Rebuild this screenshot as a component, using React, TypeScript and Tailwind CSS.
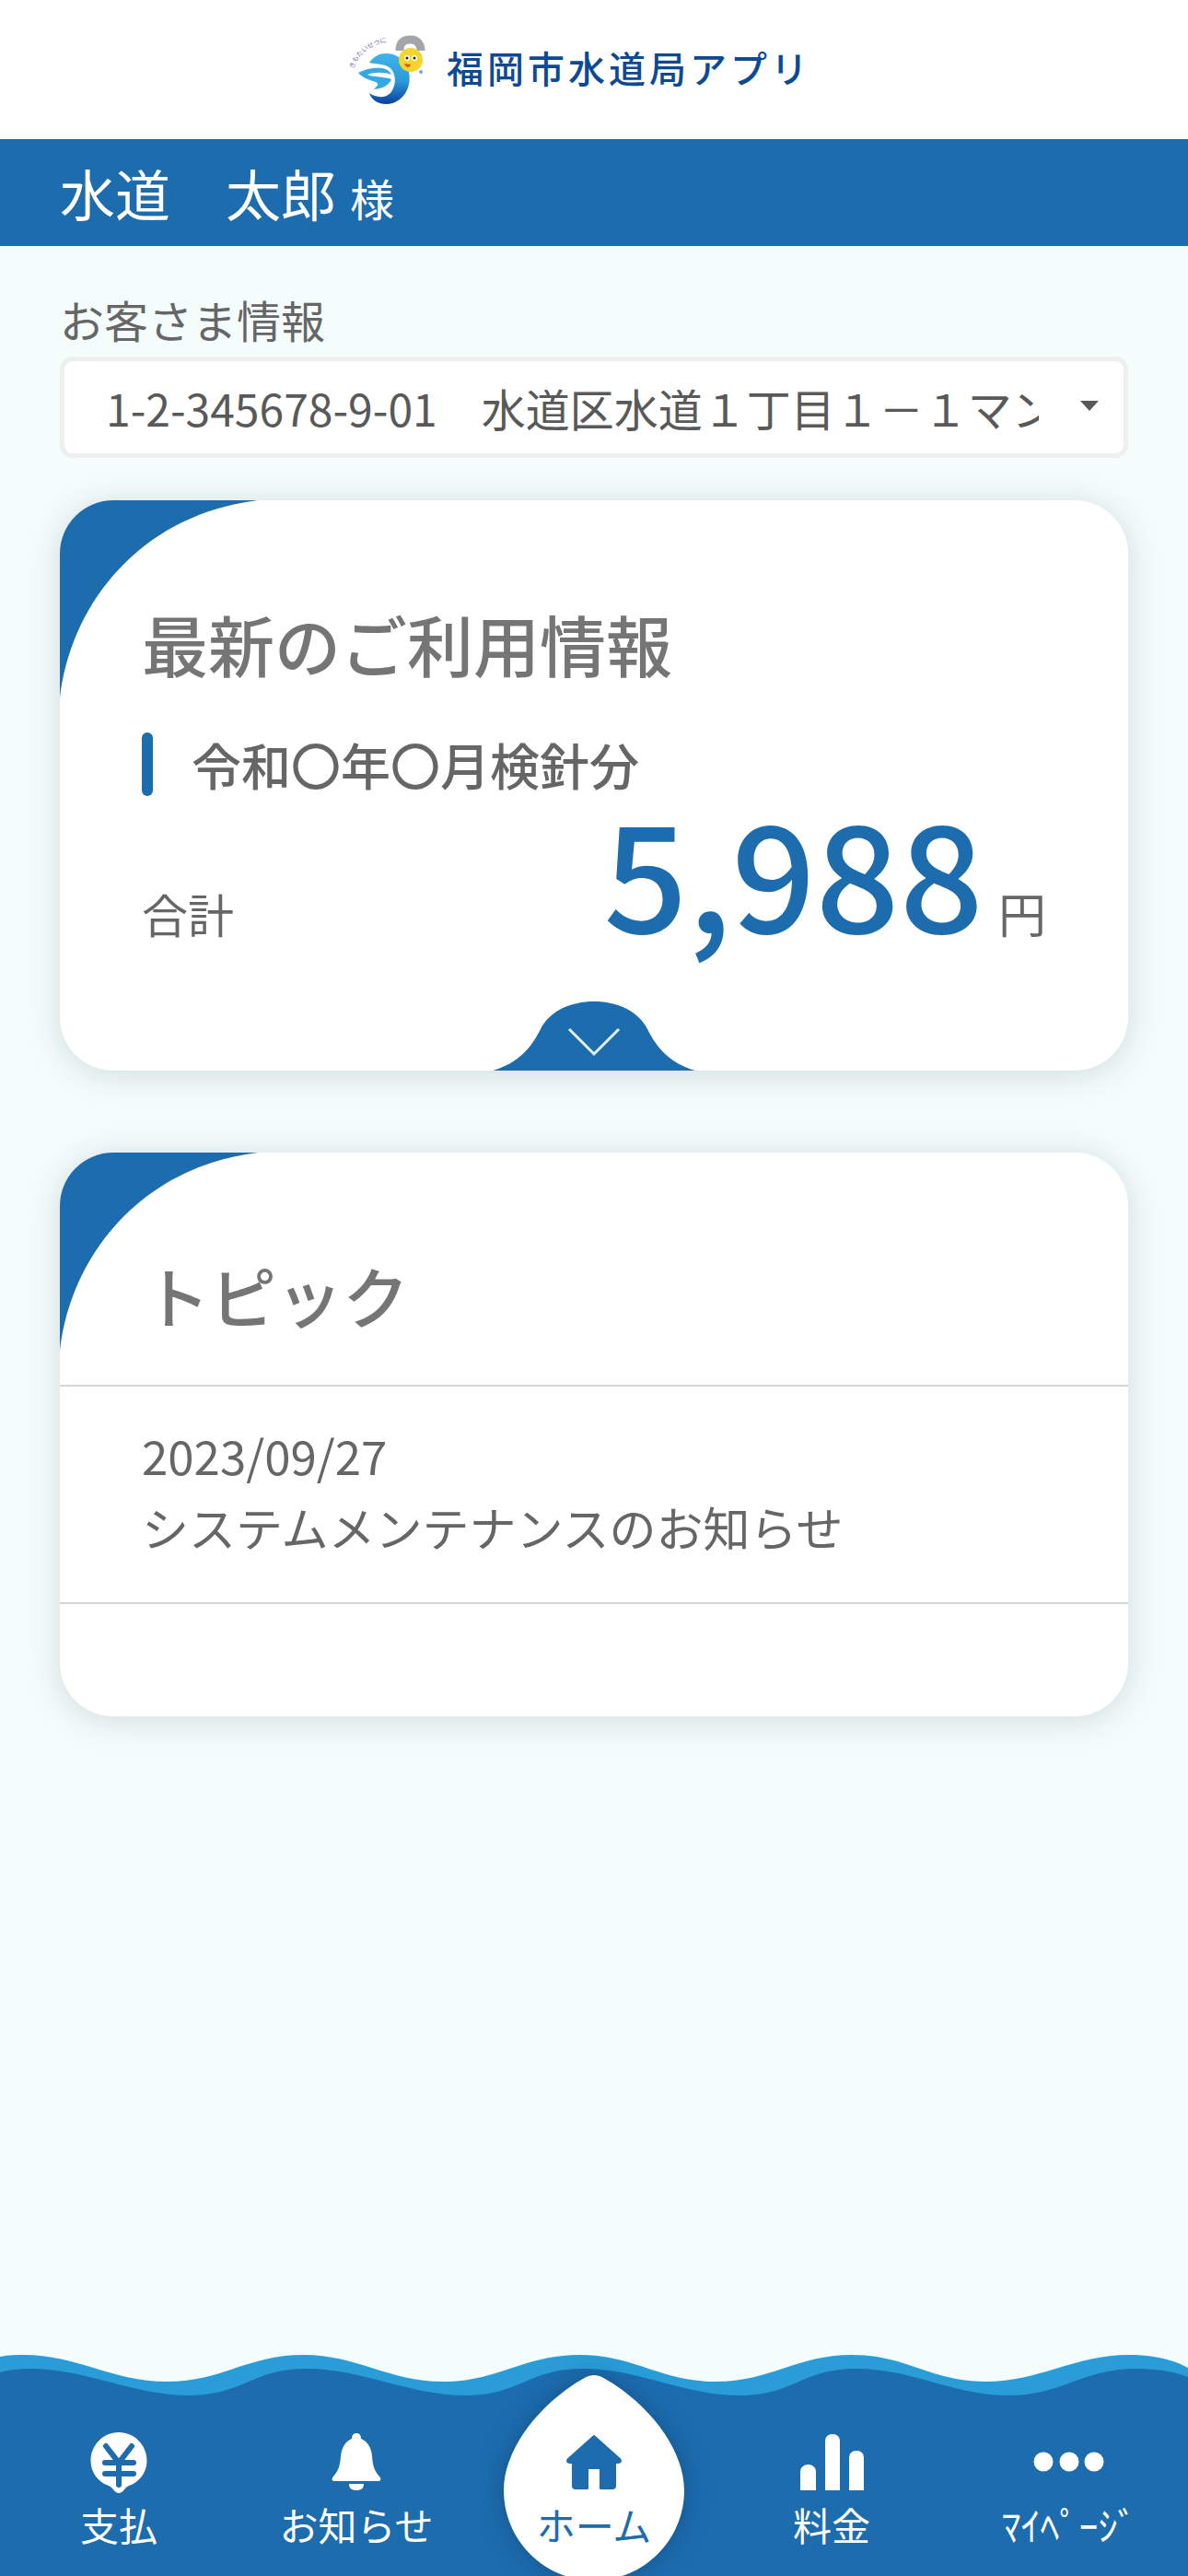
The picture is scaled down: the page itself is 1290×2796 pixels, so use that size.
const BLUE = '#1c6cae'

const CardCorner = () => (
  <svg className="absolute left-0 top-0" width="215" height="215" viewBox="0 0 215 215">
    <path d="M0 215C12 110 90 15 215 0L0 0Z" fill={BLUE} />
  </svg>
)

const Logo = () => (
  <svg width="90" height="90" viewBox="0 0 90 90">
    <defs>
      <linearGradient id="swirl" x1="0" y1="0" x2="0" y2="1">
        <stop offset="0" stopColor="#3fb4e8" />
        <stop offset="0.55" stopColor="#2a9adb" />
        <stop offset="1" stopColor="#0b3f9a" />
      </linearGradient>
      <path id="arc" d="M10 44C14 28 30 15 54 14" />
    </defs>
    <path d="M60 24C60 14 66 12 72 12C79 12 83 17 83 24" fill="none" stroke="#a3a5a8" strokeWidth="9" />
    <path
      d="M27 37C32 30 38 27 45 27C56 27 65 33 69 44C74 58 68 76 52 81C42 84 30 80 27 70C34 75 44 76 50 70C56 63 57 50 50 43C44 38 36 39 27 37Z"
      fill="url(#swirl)"
    />
    <path d="M15 48C24 43 34 42 41 43C46 44 50 47 51 50C44 47 32 47 25 50C32 53 44 52 51 55C49 61 42 65 32 66C36 62 38 60 34 58C28 56 20 54 15 48Z" fill="#35a9e4" />
    <circle cx="72" cy="34" r="13" fill="#f5d42c" />
    <circle cx="68" cy="32" r="3" fill="#fff" />
    <circle cx="76" cy="32" r="3" fill="#fff" />
    <circle cx="68" cy="32" r="1.5" fill="#222" />
    <circle cx="76" cy="32" r="1.5" fill="#222" />
    <path d="M65 38C67 43 71 43 72 39Z" fill="#d9541e" />
    <circle cx="83" cy="47" r="2" fill="#7fa6c9" />
    <text fontSize="7" fill="#6a70a8" fontFamily="'Noto Sans CJK JP',sans-serif">
      <textPath href="#arc">きもたいせつに</textPath>
    </text>
  </svg>
)

const YenIcon = () => (
  <svg width="80" height="70" viewBox="0 0 80 70">
    <path d="M40 68C35 68 34 62 29 60C17 56 9.500 45 9.500 33C9.500 16 23 2 40 2C57 2 70.500 16 70.500 33C70.500 45 63 56 51 60C46 62 45 68 40 68Z" fill="#fff" />
    <path d="M26 17L40 35L54 17M25 35H56M25 47H56M40 35V59" fill="none" stroke={BLUE} strokeWidth="6" strokeLinecap="round" />
  </svg>
)

const BellIcon = () => (
  <svg width="80" height="70" viewBox="0 0 80 70">
    <path d="M35 9C35 5 37 3 40 3C43 3 45 5 45 9C52 12 56 18 57 28C58 40 60 44 65 50C67 52 67 55 64 55H16C13 55 13 52 15 50C20 44 22 40 23 28C24 18 28 12 35 9Z" fill="#fff" />
    <path d="M32 58H48C48 63 45 65 40 65C35 65 32 63 32 58Z" fill="#fff" />
  </svg>
)

const HouseIcon = () => (
  <svg width="80" height="70" viewBox="0 0 80 70">
    <path d="M40 6L68 31C70 33 69 35 66 35H63V60C63 62 62 63 60 63H47V41H33V63H20C18 63 17 62 17 60V35H14C11 35 10 33 12 31Z" fill={BLUE} strokeLinejoin="round" stroke={BLUE} strokeWidth="2" />
  </svg>
)

const ChartIcon = () => (
  <svg width="80" height="70" viewBox="0 0 80 70">
    <path d="M6 65V45C6 40 10 37 14.500 37C19 37 23 40 23 45V65Z" fill="#fff" />
    <path d="M33 65V12C33 7 36 4 41 4C46 4 49 7 49 12V65Z" fill="#fff" />
    <path d="M59 65V30C59 25 62 22 67 22C72 22 75 25 75 30V65Z" fill="#fff" />
  </svg>
)

const DotsIcon = () => (
  <svg width="80" height="70" viewBox="0 0 80 70">
    <circle cx="12" cy="34" r="10.500" fill="#fff" />
    <circle cx="40" cy="34" r="10.500" fill="#fff" />
    <circle cx="67" cy="34" r="10.500" fill="#fff" />
  </svg>
)

const NavItem = ({ icon, label }: { icon: React.ReactNode; label: string }) => (
  <div className="flex flex-col items-center pt-[36px]">
    {icon}
    <span className="mt-[12px] text-[42px] leading-[40px] text-white whitespace-nowrap">{label}</span>
  </div>
)

export default function App() {
  return (
    <div className="flex min-h-[2796px] flex-col bg-[#f5fcfc] font-['Noto_Sans_CJK_JP','Noto_Sans',sans-serif] text-[#666666]">
      <header className="flex h-[151px] items-center justify-center bg-white pr-[35px]">
        <Logo />
        <span className="mb-[6px] ml-[21px] text-[40px] font-medium leading-none tracking-[4px] text-[#0d4a94] whitespace-nowrap">福岡市水道局アプリ</span>
      </header>

      <div className="flex h-[116px] items-baseline bg-[#1c6cae] pl-[65px] pt-[20px] text-white">
        <span className="text-[60px] leading-[76px]">水道　太郎</span>
        <span className="ml-[15px] text-[48px] leading-[76px]">様</span>
      </div>

      <main className="flex-1 px-[65px] pt-[49px]">
        <p className="text-[48px] leading-[60px]">お客さま情報</p>

        <div className="mt-[11px] flex h-[110px] items-center rounded-[14px] border-[5px] border-[#eef0f0] bg-white pl-[45px]">
          <span className="w-[1013px] overflow-hidden whitespace-nowrap text-[48px] leading-[60px] text-[#595959]">1-2-345678-9-01　水道区水道１丁目１－１マンション</span>
          <svg className="ml-[45px] mb-[4px]" width="20" height="11" viewBox="0 0 20 11">
            <path d="M0 0H20L10 11Z" fill="#595959" />
          </svg>
        </div>

        <section className="relative mt-[46px] h-[619px] overflow-hidden rounded-[58px] bg-white px-[89px] pt-[115px] shadow-[0_4px_36px_rgba(20,50,70,0.16)]">
          <CardCorner />
          <h2 className="text-[72px] font-medium leading-[80px] text-[#757575]">最新のご利用情報</h2>
          <div className="mt-[57px] flex h-[69px] items-center">
            <span className="h-full w-[12px] rounded-full bg-[#1c6cae]" />
            <span className="ml-[42px] text-[54px] font-medium leading-[69px]">令和〇年〇月検針分</span>
          </div>
          <div className="mt-[-6px] flex items-baseline justify-between">
            <span className="text-[50px] leading-[60px]">合計</span>
            <div className="flex items-baseline">
              <span className="text-[160px] font-medium leading-[170px] text-[#1c6cae]">5,988</span>
              <span className="ml-[16px] text-[52px] leading-[60px]">円</span>
            </div>
          </div>
          <svg className="absolute bottom-0 left-[470px]" width="220" height="75" viewBox="0 0 220 75">
            <path d="M0 75C28 67 42 50 52 30C62 10 85 0 110 0C135 0 158 10 168 30C178 50 192 67 220 75Z" fill={BLUE} />
            <path d="M83 30L110 57L137 30" fill="none" stroke="#e4f2f6" strokeWidth="3" />
          </svg>
        </section>

        <section className="relative mt-[89px] h-[612px] overflow-hidden rounded-[58px] bg-white shadow-[0_4px_36px_rgba(20,50,70,0.16)]">
          <CardCorner />
          <h2 className="h-[252px] pl-[91px] pt-[114px] text-[72px] font-medium leading-[80px] text-[#757575]">トピック</h2>
          <div className="h-[238px] border-y-2 border-[#d4d6d6] pl-[89px] pt-[35px]">
            <p className="text-[51px] leading-[78px]">2023/09/27</p>
            <p className="text-[51px] leading-[78px]">システムメンテナンスのお知らせ</p>
          </div>
        </section>
      </main>

      <footer className="relative h-[240px] overflow-hidden">
        <svg className="block" width="1290" height="46" viewBox="0 0 1290 46" preserveAspectRatio="none">
          <path d="M0 2C10 0 18 0 25 0C85 0 121 29 181 29C241 29 269 0 329 0C389 0 421 29 481 29C541 29 569 0 629 0C689 0 717 29 777 29C837 29 865 0 925 0C985 0 1010 29 1070 29C1130 29 1166 0 1226 0C1255 0 1275 6 1290 14V46H0Z" fill="#2a9dd8" />
          <path d="M0 19C10 16 22 15 33 15C93 15 145 44 205 44C265 44 273 15 333 15C393 15 445 44 505 44C565 44 573 15 633 15C693 15 743 44 803 44C863 44 870 15 930 15C990 15 1035 44 1095 44C1155 44 1174 15 1234 15C1255 15 1275 18 1290 24V46H0Z" fill={BLUE} />
        </svg>
        <nav className="grid h-[194px] grid-cols-5 bg-[#1c6cae]">
          <NavItem icon={<YenIcon />} label="支払" />
          <NavItem icon={<BellIcon />} label="お知らせ" />
          <div className="relative flex flex-col items-center pt-[36px]">
            <svg className="absolute left-[31px] top-[-24px] drop-shadow-[0_0_14px_rgba(10,40,80,0.35)]" width="196" height="223" viewBox="0 0 196 223">
              <path d="M98 0C105 0 110 4 120 10C165 40 196 85 196 125C196 179 152 223 98 223C44 223 0 179 0 125C0 85 31 40 76 10C86 4 91 0 98 0Z" fill="#fff" />
            </svg>
            <div className="relative flex flex-col items-center">
              <HouseIcon />
              <span className="mt-[12px] text-[42px] leading-[40px] text-[#1c6cae] whitespace-nowrap">ホーム</span>
            </div>
          </div>
          <NavItem icon={<ChartIcon />} label="料金" />
          <NavItem icon={<DotsIcon />} label="ﾏｲﾍﾟｰｼﾞ" />
        </nav>
      </footer>
    </div>
  )
}
